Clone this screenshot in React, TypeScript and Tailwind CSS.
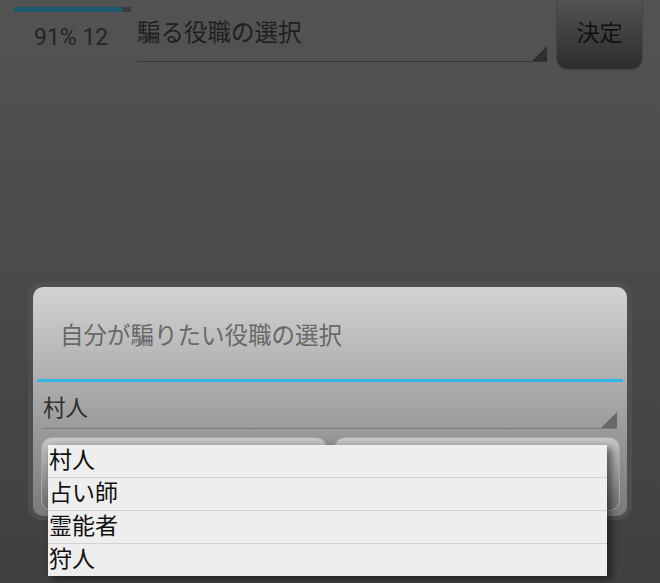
import React from "react";

const items = ["村人", "占い師", "霊能者", "狩人"];

export default function App() {
  return (
    <div className="relative w-[660px] h-[583px] overflow-hidden bg-gradient-to-b from-[#535353] to-[#404040] font-[family-name:Roboto,'Noto_Sans_CJK_JP',sans-serif]">
      {/* top bar */}
      <div className="flex h-[70px]">
        <div className="w-[137px] pt-[7px] pl-[14px]">
          <div className="flex h-[5px] w-[117px] bg-[#3b3b3b]">
            <div className="w-[108px] bg-[#1d5a72]" />
          </div>
          <div className="mt-[13px] pl-[20px] text-[23px] leading-[26px] text-[#252525]">91% 12</div>
        </div>
        <div className="relative w-[410px] h-[62px] border-b border-[#363636]">
          <div className="pt-[18px] text-[23.5px] leading-[30px] text-[#1f1f1f]">騙る役職の選択</div>
          <div className="absolute right-0 bottom-0 w-0 h-0 border-l-[15px] border-l-transparent border-b-[15px] border-b-[#2f2f2f]" />
        </div>
        <div className="ml-[9px] flex w-[87px] h-[70px] items-center justify-center rounded-b-[12px] bg-gradient-to-b from-[#535353] to-[#2d2d2d] border-x border-b border-[#444] text-[23px] text-[#111]">
          決定
        </div>
      </div>

      {/* dialog */}
      <div className="mt-[212px] ml-[28px] w-[604px] rounded-[14px] bg-[#4f4f4f] p-[5px] pb-[4px]">
        <div className="h-[229px] rounded-[10px] bg-gradient-to-b from-[#d3d3d3] to-[#7a7a7a] flex flex-col">
          <div className="h-[92px] pl-[27px] pt-[34px] text-[23.5px] leading-[30px] text-[#686868]">
            自分が騙りたい役職の選択
          </div>
          <div className="mx-[4px] h-[3px] bg-[#33b5e5]" />
          <div className="relative ml-[9px] mr-[10px] h-[47px] border-b border-[#7c7c7c]">
            <div className="pl-[1px] pt-[12px] text-[22.5px] leading-[28px] text-[#2e2e2e]">村人</div>
            <div className="absolute right-0 bottom-0 w-0 h-0 border-l-[16px] border-l-transparent border-b-[16px] border-b-[#686868]" />
          </div>
          <div className="flex gap-[7px] pl-[8px] pr-[7px] pt-[8px]">
            <div className="flex-1 h-[74px] rounded-[11px] border border-[#a8a8a8] bg-gradient-to-b from-[#c9c9c9] to-[#6c6c6c]" />
            <div className="flex-1 h-[74px] rounded-[11px] border border-[#a8a8a8] bg-gradient-to-b from-[#c9c9c9] to-[#6c6c6c]" />
          </div>
        </div>
      </div>

      {/* dropdown list */}
      <div className="absolute left-[48px] top-[445px] w-[559px] bg-[#eeeeee] shadow-[4px_3px_8px_rgba(0,0,0,0.55)]">
        {items.map((t, i) => (
          <div
            key={t}
            className={
              i === 0
                ? "h-[32px] flex items-center pl-[1px] text-[23px] text-[#111]"
                : "h-[33px] flex items-center pl-[1px] text-[23px] text-[#111] border-t border-[#d2d2d2]"
            }
          >
            {t}
          </div>
        ))}
      </div>
    </div>
  );
}
